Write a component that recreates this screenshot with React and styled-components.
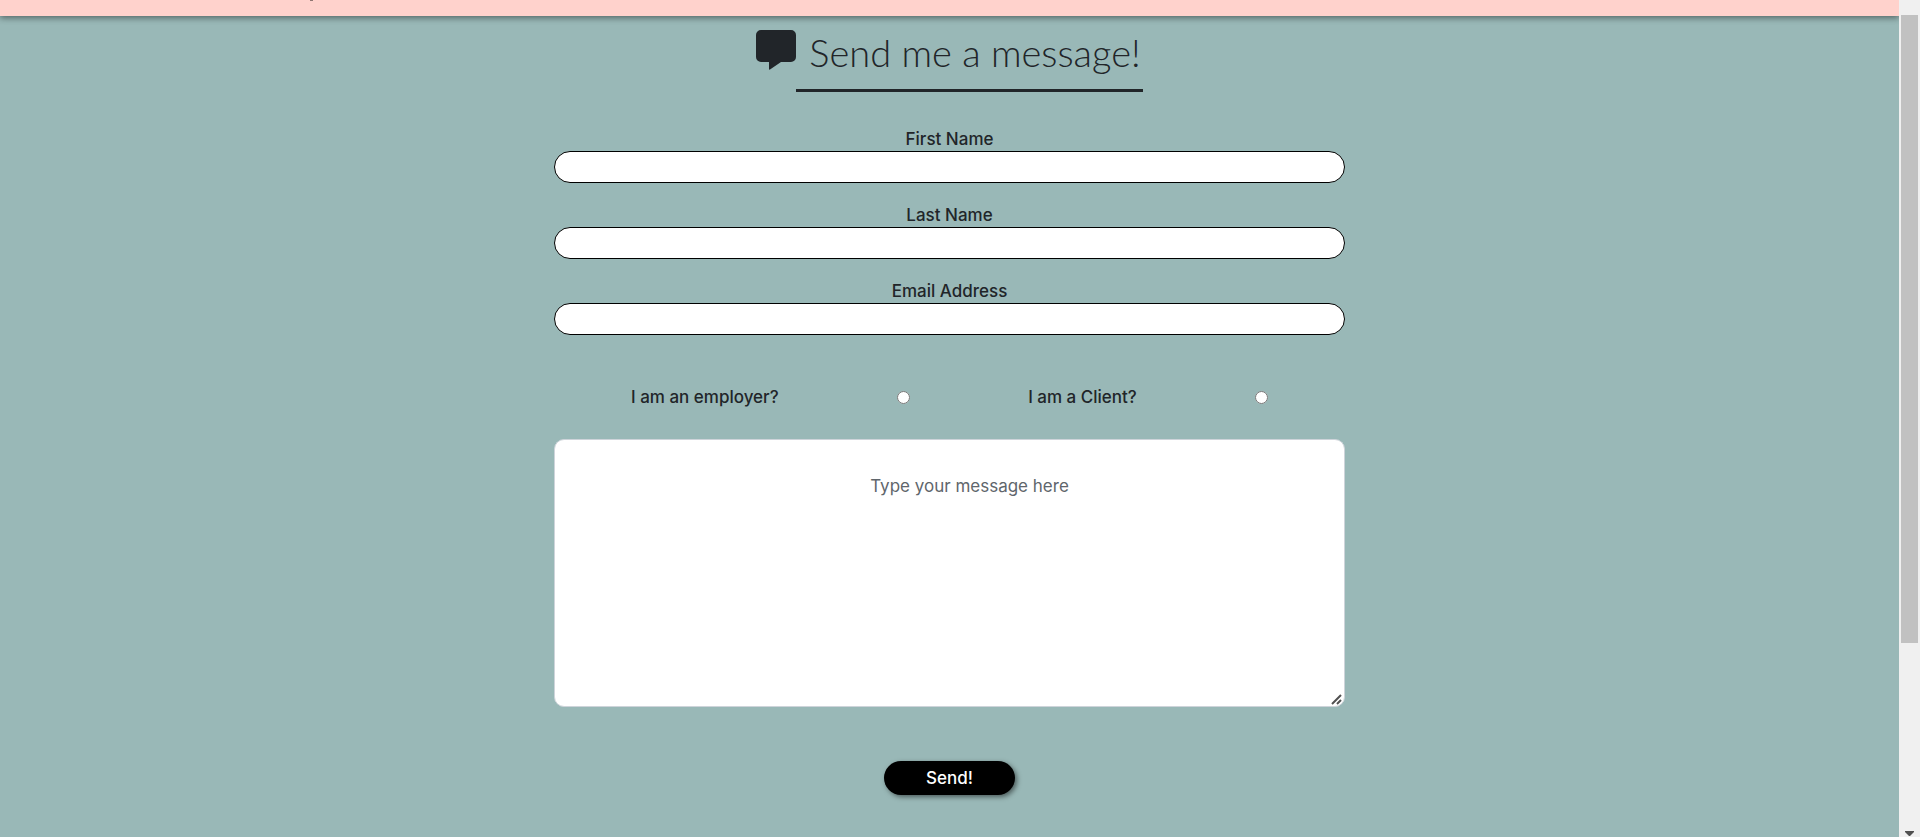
import React from "react";
import styled, { createGlobalStyle } from "styled-components";

const GlobalStyle = createGlobalStyle`
  *, *::before, *::after { box-sizing: border-box; }
  body {
    margin: 0;
    background: #99b8b7;
    color: #212529;
    font-family: Inter, "Open Sans", sans-serif;
    font-size: 17px;
    line-height: 24px;
  }
`;

const Shell = styled.div`
  display: flex;
  height: 100vh;
  overflow: hidden;
`;

const Page = styled.div`
  flex: 1;
  min-width: 0;
  display: flex;
  flex-direction: column;
`;

const NavBar = styled.header`
  flex: none;
  height: 16px;
  padding-left: 310px;
  background: #ffd2cc;
  box-shadow: 0 2px 6px rgba(0, 0, 0, 0.45);
`;

const NavMark = styled.span`
  display: block;
  width: 3px;
  height: 1px;
  background: #8f7672;
`;

const Contact = styled.main`
  display: flex;
  flex-direction: column;
  align-items: center;
  padding-top: 14px;
`;

const Heading = styled.h1`
  display: flex;
  align-items: flex-start;
  margin: 0 0 35px;
  font-family: Lato, sans-serif;
  font-size: 38px;
  font-weight: 300;
  line-height: 44px;
`;

const HeadingText = styled.span`
  padding: 0 2px 15px 13px;
  border-bottom: 3px solid #212529;
`;

const Form = styled.form`
  display: flex;
  flex-direction: column;
  width: 41.67%;
`;

const Field = styled.div`
  display: flex;
  flex-direction: column;
  margin-bottom: 20px;
  text-align: center;
`;

const Label = styled.label`
  font-weight: 500;
`;

const TextInput = styled.input`
  width: 100%;
  height: 32px;
  padding: 0 16px;
  border: 1px solid #000;
  border-radius: 16px;
  background: #fff;
  font: inherit;
  text-align: center;
`;

const Choices = styled.div`
  display: flex;
  justify-content: space-around;
  align-items: center;
  margin: 30px 0;
  padding: 0 18px;
`;

const Radio = styled.input`
  width: 13px;
  height: 13px;
  margin: 0;
`;

const MessageBox = styled.div`
  position: relative;
`;

const Message = styled.textarea`
  display: block;
  width: 100%;
  height: 268px;
  padding: 34px 0 0 40px;
  border: 1px solid #ced4da;
  border-radius: 10px;
  background: #fff;
  font: inherit;
  text-align: center;
  resize: vertical;

  &::placeholder { color: #5f666c; }
  &::-webkit-resizer { background: transparent; }
`;

const Grip = styled.svg`
  position: absolute;
  right: 3px;
  bottom: 2px;
  pointer-events: none;
`;

const SendButton = styled.button`
  align-self: center;
  width: 131px;
  height: 34px;
  margin-top: 54px;
  padding: 0;
  border: 0;
  border-radius: 17px;
  background: #000;
  color: #fff;
  font: inherit;
  font-weight: 500;
  box-shadow: 2px 2px 5px rgba(0, 0, 0, 0.5);
`;

const ScrollTrack = styled.div`
  flex: none;
  display: flex;
  flex-direction: column;
  justify-content: space-between;
  align-items: center;
  width: 21px;
  padding: 15px 0 1px;
  background: #f0f0f0;
`;

const ScrollThumb = styled.div`
  width: 17px;
  height: 76.5%;
  background: #c1c1c1;
`;

const fields = [
  { id: "first-name", label: "First Name", type: "text" },
  { id: "last-name", label: "Last Name", type: "text" },
  { id: "email", label: "Email Address", type: "email" },
];

const choices = [
  { id: "employer", label: "I am an employer?" },
  { id: "client", label: "I am a Client?" },
];

export default function App() {
  return (
    <>
      <GlobalStyle />
      <Shell>
        <Page>
          <NavBar>
            <NavMark />
          </NavBar>
          <Contact>
            <Heading>
              <svg width="40" height="40" viewBox="0 0 40 40" fill="currentColor" aria-hidden="true">
                <path d="M5 0H35A5 5 0 0 1 40 5V27A5 5 0 0 1 35 32H25L14 39.6Q13 40 13 39V32H5A5 5 0 0 1 0 27V5A5 5 0 0 1 5 0Z" />
              </svg>
              <HeadingText>Send me a message!</HeadingText>
            </Heading>
            <Form onSubmit={(e) => e.preventDefault()}>
              {fields.map((f) => (
                <Field key={f.id}>
                  <Label htmlFor={f.id}>{f.label}</Label>
                  <TextInput id={f.id} name={f.id} type={f.type} />
                </Field>
              ))}
              <Choices>
                {choices.map((c) => (
                  <React.Fragment key={c.id}>
                    <Label htmlFor={c.id}>{c.label}</Label>
                    <Radio id={c.id} type="radio" name="role" value={c.id} />
                  </React.Fragment>
                ))}
              </Choices>
              <MessageBox>
                <Message aria-label="Message" placeholder="Type your message here" />
                <Grip width="11" height="11" viewBox="0 0 11 11" fill="none" stroke="#505050" strokeWidth="2" aria-hidden="true">
                  <path d="M1 10L10 1M6 10L10 6" />
                </Grip>
              </MessageBox>
              <SendButton type="submit">Send!</SendButton>
            </Form>
          </Contact>
        </Page>
        <ScrollTrack aria-hidden="true">
          <ScrollThumb />
          <svg width="9" height="5" viewBox="0 0 9 5" fill="#505050">
            <path d="M0 0H9V1L5 5H4L0 1Z" />
          </svg>
        </ScrollTrack>
      </Shell>
    </>
  );
}
